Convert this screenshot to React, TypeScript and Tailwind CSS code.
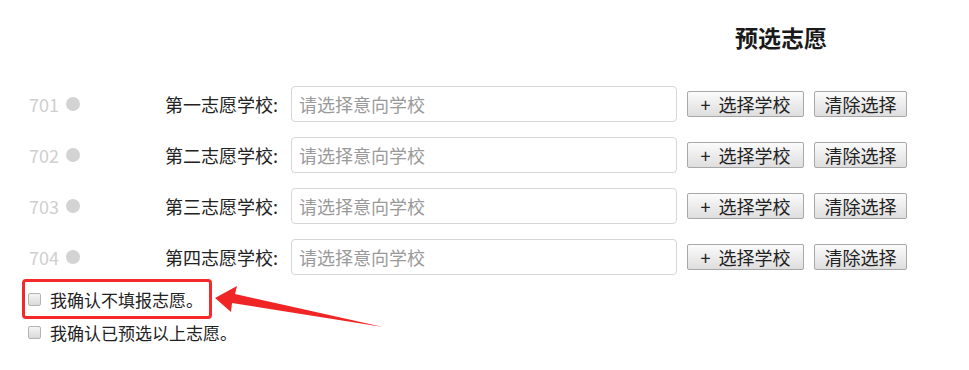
import React from "react";

const rows = [
    { no: "701", label: "第一志愿学校:" },
    { no: "702", label: "第二志愿学校:" },
    { no: "703", label: "第三志愿学校:" },
    { no: "704", label: "第四志愿学校:" },
];

function Checkbox() {
    return (
        <span className="inline-block w-[13px] h-[13px] rounded-[2px] border border-[#b4b4b4] bg-gradient-to-b from-[#f4f4f4] to-[#dadada]" />
    );
}

export default function App() {
    return (
        <div className="relative w-[969px] h-[370px] bg-white text-[#222] font-['Noto_Sans_CJK_SC','Noto_Sans',sans-serif]">
            <div className="pt-[22px] pl-[735px] text-[23px] leading-[30px] font-bold text-[#1a1a1a]">预选志愿</div>

            <div className="mt-[34px] flex flex-col gap-[15px]">
                {rows.map((r) => (
                    <div key={r.no} className="flex items-center h-[36px] pl-[29px]">
                        <span className="w-[37px] text-[18px] leading-none text-[#cfcfcf]">{r.no}</span>
                        <span className="w-[14px] h-[14px] rounded-full bg-[#d3d3d3]" />
                        <span className="w-[198px] text-right text-[18px] leading-none text-[#222]">{r.label}</span>
                        <input
                            placeholder="请选择意向学校"
                            className="ml-[13px] w-[386px] h-[36px] px-[7px] border border-[#d6d6d6] rounded-[4px] text-[18px] placeholder:text-[#9a9a9a] outline-none"
                        />
                        <button className="ml-[10px] w-[117px] h-[26px] flex items-center justify-center rounded-[2px] border border-[#a8a8a8] bg-gradient-to-b from-[#fbfbfb] to-[#dedede] text-[18px] leading-none text-[#222]">
                            <span className="mr-[8px]">+</span>选择学校
                        </button>
                        <button className="ml-[10px] w-[93px] h-[26px] flex items-center justify-center rounded-[2px] border border-[#a8a8a8] bg-gradient-to-b from-[#fbfbfb] to-[#dedede] text-[18px] leading-none text-[#222]">
                            清除选择
                        </button>
                    </div>
                ))}
            </div>

            <div className="mt-[4px] ml-[22px] w-[190px] h-[40px] flex items-center pl-[3px] border-[3px] border-[#f42a2a] rounded-[4px]">
                <Checkbox />
                <span className="ml-[9px] text-[17px] leading-none">我确认不填报志愿。</span>
            </div>
            <div className="mt-[1px] ml-[28px] h-[24px] flex items-center">
                <Checkbox />
                <span className="ml-[9px] text-[17px] leading-none">我确认已预选以上志愿。</span>
            </div>

            {/* annotation arrow */}
            <svg className="absolute left-0 top-0 pointer-events-none" width="969" height="370">
                <polygon
                    points="215,298 237,286 235,294 383,327 232,303 231,312"
                    fill="#f02525"
                />
            </svg>
        </div>
    );
}
